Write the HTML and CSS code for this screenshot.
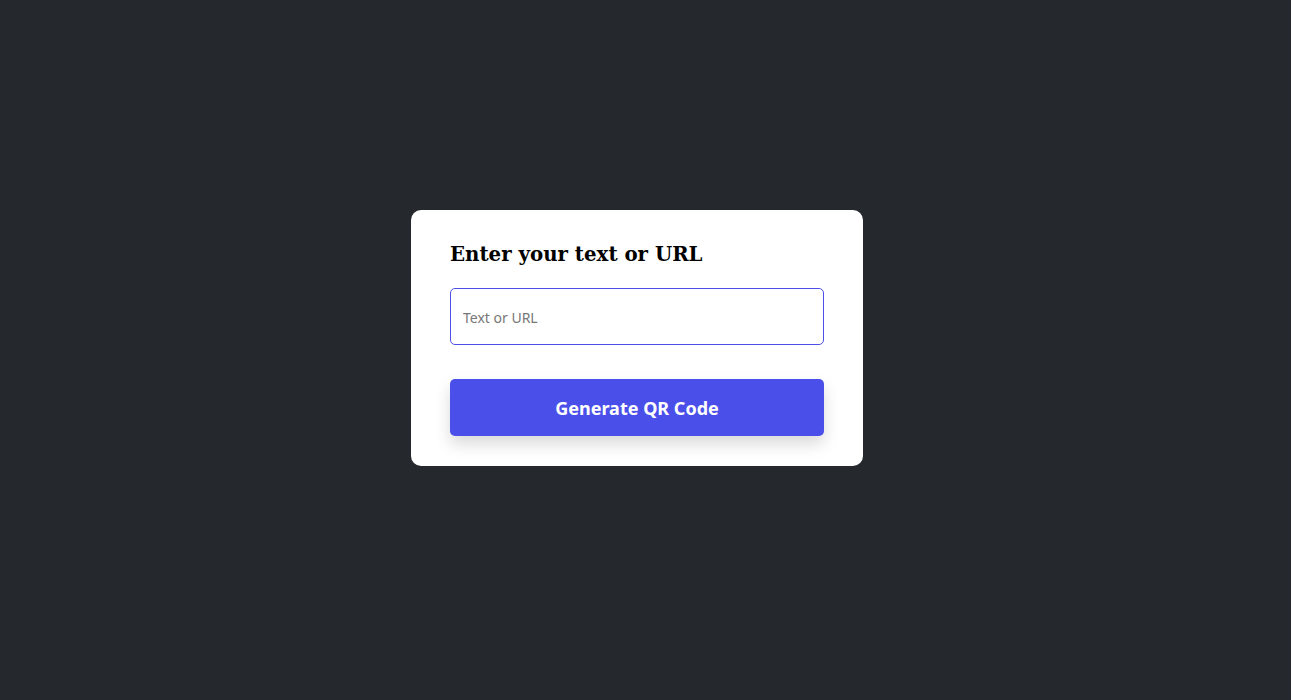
FILE: index.html
```html
<!DOCTYPE html>
<html lang="en">
<head>
<meta charset="utf-8">
<title>QR Code Generator</title>
<link rel="stylesheet" href="styles.css">
</head>
<body>
<main class="page">
  <section class="card">
    <h1 class="card-title">Enter your text or URL</h1>
    <input class="field" type="text" placeholder="Text or URL">
    <button class="btn" type="button">Generate QR Code</button>
  </section>
</main>
</body>
</html>
```

FILE: styles.css
```css
html, body {
  margin: 0;
  padding: 0;
  background: #25282d;
}
.page {
  box-sizing: border-box;
  height: 676px;
  padding-right: 17px;
  display: flex;
  align-items: center;
  justify-content: center;
}
.card {
  box-sizing: border-box;
  width: 452px;
  background: #ffffff;
  border-radius: 10px;
  padding: 29px 39px 30px;
  display: flex;
  flex-direction: column;
}
.card-title {
  margin: 0 0 19px;
  font-family: "DejaVu Serif", "Liberation Serif", serif;
  font-weight: 700;
  font-size: 19.8px;
  line-height: 30px;
  color: #000;
}
.field {
  box-sizing: border-box;
  height: 57px;
  width: 100%;
  border: 1px solid #4d50e6;
  border-radius: 5px;
  padding: 1px 12px 0;
  font-family: "Noto Sans", "Open Sans", sans-serif;
  font-size: 14px;
  color: #222;
  outline: none;
}
.field::placeholder {
  color: #777;
}
.btn {
  margin-top: 34px;
  height: 57px;
  width: 100%;
  border: none;
  border-radius: 5px;
  background: #4b4fea;
  color: #fff;
  font-family: "Noto Sans", "Open Sans", sans-serif;
  font-weight: 700;
  font-size: 18px;
  box-shadow: 0 8px 16px rgba(0, 0, 0, 0.15);
  cursor: pointer;
}
```
